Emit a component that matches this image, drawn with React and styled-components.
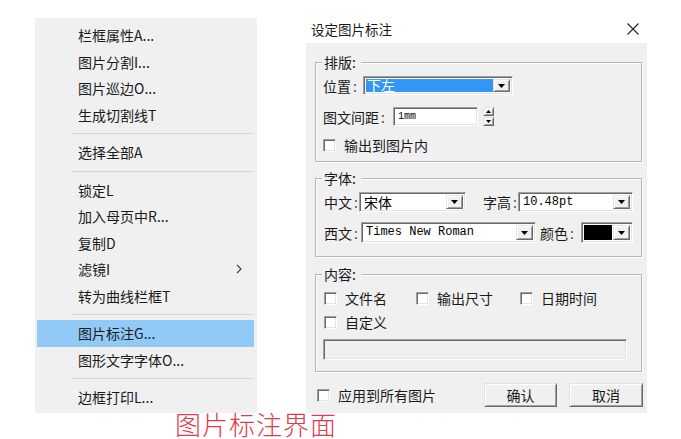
import React from 'react';
import styled, { createGlobalStyle } from 'styled-components';

const CJK = '"Noto Sans CJK SC", "Microsoft YaHei", sans-serif';
const MONO = '"Liberation Mono", "DejaVu Sans Mono", monospace';

const GlobalStyle = createGlobalStyle`
  html, body {
    margin: 0;
    padding: 0;
    background: #ffffff;
  }
  body {
    font-family: ${CJK};
    color: #000;
  }
`;

const Page = styled.div`
  width: 681px;
  box-sizing: border-box;
  padding-left: 35px;
`;

const Row = styled.div`
  display: flex;
  align-items: flex-start;
`;

/* ---------- context menu ---------- */

const Menu = styled.div`
  margin-top: 18px;
  width: 222px;
  box-sizing: border-box;
  padding: 4px 3px 2px 2px;
  background: #f0f0f0;
  display: flex;
  flex-direction: column;
`;

const MenuItem = styled.div`
  height: 26.5px;
  display: flex;
  align-items: center;
  justify-content: space-between;
  padding: 0 12px 0 41px;
  font-size: 14px;
  color: #1a1a1a;
  white-space: nowrap;
  background: ${p => (p.$active ? '#91c9f7' : 'transparent')};
`;

const Separator = styled.div`
  height: 1px;
  margin: 5px 0 5px 35px;
  background: #d7d7d7;
`;

const Chevron = () => (
  <svg width="6" height="10" viewBox="0 0 6 10">
    <path d="M1 1 L5 5 L1 9" fill="none" stroke="#444" strokeWidth="1.2" />
  </svg>
);

/* ---------- dialog ---------- */

const Dialog = styled.div`
  margin: 15px 0 0 49px;
  width: 341px;
`;

const TitleBar = styled.div`
  height: 28px;
  display: flex;
  align-items: center;
  justify-content: space-between;
  padding: 0 8px 0 5px;
  font-size: 13.5px;
  color: #1a1a1a;
`;

const Client = styled.div`
  background: #f0f0f0;
  padding: 11px 5px 6px 9px;
`;

const Group = styled.fieldset`
  margin: ${p => p.$mt || 0}px 0 0 0;
  padding: 0 8px ${p => p.$pb}px 7px;
  min-width: 0;
  border: 1px solid #b5b5b5;
  box-shadow: inset 1px 1px 0 #ffffff, 1px 1px 0 #ffffff;
`;

const Legend = styled.legend`
  margin-left: -1px;
  padding: 0 5px 0 2px;
  font-size: 14px;
  line-height: 16px;
  background: #f0f0f0;
  color: #1a1a1a;
`;

const Field = styled.div`
  display: flex;
  align-items: center;
  height: ${p => p.$h}px;
  margin-top: ${p => p.$mt || 0}px;
  margin-left: ${p => p.$ml || 0}px;
`;

const Label = styled.span`
  flex: none;
  width: ${p => p.$w}px;
  margin-left: ${p => p.$ml || 0}px;
  font-size: 14px;
  line-height: 16px;
  white-space: nowrap;
  color: #1a1a1a;
`;

const Colon = styled.span`
  margin-left: 2px;
  color: #555;
`;

const Sunken = styled.div`
  box-sizing: border-box;
  border: 1px solid;
  border-color: #a0a0a0 #ffffff #ffffff #a0a0a0;
  box-shadow: inset 1px 1px 0 #696969, inset -1px -1px 0 #e3e3e3;
`;

const Combo = styled(Sunken)`
  flex: none;
  width: ${p => p.$w}px;
  height: ${p => p.$h}px;
  display: flex;
  padding: 2px;
  background: #ffffff;
`;

const ComboText = styled.div`
  flex: 1;
  min-width: 0;
  display: flex;
  align-items: center;
  padding-left: ${p => (p.$sel ? 1 : 2)}px;
  font-family: ${p => (p.$mono ? MONO : CJK)};
  font-size: ${p => (p.$mono ? 12 : 14)}px;
  line-height: 13px;
  white-space: nowrap;
  color: ${p => (p.$sel ? '#ffffff' : '#000000')};
  background: ${p => (p.$sel ? '#3296f5' : 'transparent')};
`;

const Swatch = styled.div`
  flex: 1;
  margin: 0 1px 0 0;
  background: #000000;
`;

const Raised = styled.div`
  box-sizing: border-box;
  background: #f0f0f0;
  border: 1px solid;
  border-color: #e3e3e3 #696969 #696969 #e3e3e3;
  box-shadow: inset 1px 1px 0 #ffffff, inset -1px -1px 0 #a0a0a0;
  display: flex;
  align-items: center;
  justify-content: center;
`;

const DropBtn = styled(Raised)`
  flex: none;
  width: 17px;
`;

const Down = ({ w = 7 }) => (
  <svg width={w} height={Math.ceil(w / 2)} viewBox={`0 0 ${w} ${Math.ceil(w / 2)}`}>
    <polygon points={`0,0 ${w},0 ${w / 2},${Math.ceil(w / 2)}`} fill="#000" />
  </svg>
);

const Up = ({ w = 5 }) => (
  <svg width={w} height={Math.ceil(w / 2)} viewBox={`0 0 ${w} ${Math.ceil(w / 2)}`}>
    <polygon points={`0,${Math.ceil(w / 2)} ${w},${Math.ceil(w / 2)} ${w / 2},0`} fill="#000" />
  </svg>
);

const Input = styled(Sunken)`
  flex: none;
  width: ${p => p.$w}px;
  height: ${p => p.$h}px;
  display: flex;
  align-items: center;
  padding-left: 4px;
  background: ${p => (p.$disabled ? '#f0f0f0' : '#ffffff')};
  font-family: ${MONO};
  font-size: 10px;
`;

const Spin = styled.div`
  flex: none;
  margin-left: 5px;
  width: 11px;
  height: 19px;
  display: flex;
  flex-direction: column;
  gap: 1px;
`;

const SpinBtn = styled(Raised)`
  flex: 1;
`;

const CheckItem = styled.label`
  flex: none;
  display: flex;
  align-items: center;
  gap: 8px;
  width: ${p => (p.$w ? `${p.$w}px` : 'auto')};
  font-size: 14px;
  line-height: 16px;
  color: #1a1a1a;
  white-space: nowrap;
`;

const Box = styled(Sunken)`
  flex: none;
  width: 13px;
  height: 13px;
  background: #ffffff;
`;

const Footer = styled.div`
  display: flex;
  align-items: center;
  justify-content: space-between;
  margin: 11px -1px 0 2px;
  height: 24px;
`;

const Buttons = styled.div`
  display: flex;
  gap: 12px;
`;

const Button = styled(Raised)`
  width: ${p => p.$w}px;
  height: 24px;
  font-size: 14px;
  color: #1a1a1a;
`;

const Caption = styled.div`
  margin: -3px 0 0 140px;
  font-size: 26px;
  line-height: 28px;
  font-weight: 300;
  letter-spacing: 1px;
  color: #e23a4b;
`;

const CloseIcon = () => (
  <svg width="12" height="12" viewBox="0 0 12 12">
    <path d="M0.5 0.5 L11.5 11.5 M11.5 0.5 L0.5 11.5" stroke="#222" strokeWidth="1.1" />
  </svg>
);

const menuItems = [
  { label: '栏框属性A...' },
  { label: '图片分割I...' },
  { label: '图片巡边O...' },
  { label: '生成切割线T' },
  { sep: true },
  { label: '选择全部A' },
  { sep: true },
  { label: '锁定L' },
  { label: '加入母页中R...' },
  { label: '复制D' },
  { label: '滤镜I', sub: true },
  { label: '转为曲线栏框T' },
  { sep: true },
  { label: '图片标注G...', active: true },
  { label: '图形文字字体O...' },
  { sep: true },
  { label: '边框打印L...' },
];

const L = ({ text, w, ml }) => (
  <Label $w={w} $ml={ml}>
    {text}
    <Colon>:</Colon>
  </Label>
);

export default function App() {
  return (
    <>
      <GlobalStyle />
      <Page>
        <Row>
          <Menu>
            {menuItems.map((m, i) =>
              m.sep ? (
                <Separator key={i} />
              ) : (
                <MenuItem key={i} $active={m.active}>
                  <span>{m.label}</span>
                  {m.sub && <Chevron />}
                </MenuItem>
              )
            )}
          </Menu>

          <Dialog>
            <TitleBar>
              <span>设定图片标注</span>
              <CloseIcon />
            </TitleBar>
            <Client>
              <Group $pb={9}>
                <Legend>排版:</Legend>
                <Field $h={19} $mt={6}>
                  <L text="位置" w={40} />
                  <Combo $w={150} $h={19}>
                    <ComboText $sel>下左</ComboText>
                    <DropBtn>
                      <Down />
                    </DropBtn>
                  </Combo>
                </Field>
                <Field $h={19} $mt={12}>
                  <L text="图文间距" w={70} />
                  <Input $w={85} $h={19}>1mm</Input>
                  <Spin>
                    <SpinBtn>
                      <Up />
                    </SpinBtn>
                    <SpinBtn>
                      <Down w={5} />
                    </SpinBtn>
                  </Spin>
                </Field>
                <Field $h={14} $mt={12}>
                  <CheckItem>
                    <Box />
                    输出到图片内
                  </CheckItem>
                </Field>
              </Group>

              <Group $mt={8} $pb={13}>
                <Legend>字体:</Legend>
                <Field $h={20} $mt={6} $ml={1}>
                  <L text="中文" w={35} />
                  <Combo $w={107} $h={20}>
                    <ComboText>宋体</ComboText>
                    <DropBtn>
                      <Down />
                    </DropBtn>
                  </Combo>
                  <L text="字高" w={35} ml={17} />
                  <Combo $w={115} $h={20}>
                    <ComboText $mono>10.48pt</ComboText>
                    <DropBtn>
                      <Down />
                    </DropBtn>
                  </Combo>
                </Field>
                <Field $h={21} $mt={10} $ml={1}>
                  <L text="西文" w={37} />
                  <Combo $w={175} $h={21}>
                    <ComboText $mono>Times New Roman</ComboText>
                    <DropBtn>
                      <Down />
                    </DropBtn>
                  </Combo>
                  <L text="颜色" w={41} ml={4} />
                  <Combo $w={52} $h={21}>
                    <Swatch />
                    <DropBtn>
                      <Down />
                    </DropBtn>
                  </Combo>
                </Field>
              </Group>

              <Group $mt={9} $pb={11}>
                <Legend>内容:</Legend>
                <Field $h={16} $mt={8} $ml={1}>
                  <CheckItem $w={92}>
                    <Box />
                    文件名
                  </CheckItem>
                  <CheckItem $w={104}>
                    <Box />
                    输出尺寸
                  </CheckItem>
                  <CheckItem>
                    <Box />
                    日期时间
                  </CheckItem>
                </Field>
                <Field $h={16} $mt={8} $ml={1}>
                  <CheckItem>
                    <Box />
                    自定义
                  </CheckItem>
                </Field>
                <Field $h={21} $mt={9}>
                  <Input $w={304} $h={21} $disabled />
                </Field>
              </Group>

              <Footer>
                <CheckItem>
                  <Box />
                  应用到所有图片
                </CheckItem>
                <Buttons>
                  <Button $w={73}>确认</Button>
                  <Button $w={74}>取消</Button>
                </Buttons>
              </Footer>
            </Client>
          </Dialog>
        </Row>
        <Caption>图片标注界面</Caption>
      </Page>
    </>
  );
}
